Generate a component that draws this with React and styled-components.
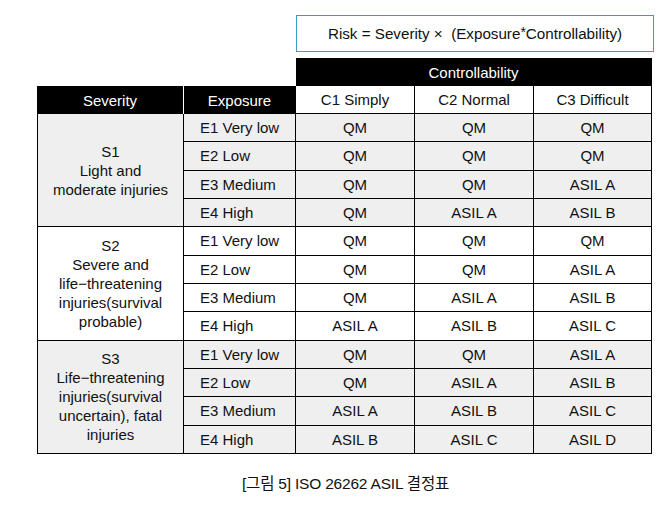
import React from "react"
import styled, { createGlobalStyle } from "styled-components"

const GlobalStyle = createGlobalStyle`
  body {
    margin: 0;
    background: #fff;
    font-family: "Liberation Sans", "Noto Sans CJK KR", sans-serif;
    color: #111;
  }
`

const groups = [
  {
    label: ["S1", "Light and", "moderate injuries"],
    shaded: true,
    rows: [
      ["E1 Very low", "QM", "QM", "QM"],
      ["E2 Low", "QM", "QM", "QM"],
      ["E3 Medium", "QM", "QM", "ASIL A"],
      ["E4 High", "QM", "ASIL A", "ASIL B"],
    ],
  },
  {
    label: ["S2", "Severe and", "life\u2212threatening", "injuries(survival", "probable)"],
    shaded: false,
    rows: [
      ["E1 Very low", "QM", "QM", "QM"],
      ["E2 Low", "QM", "QM", "ASIL A"],
      ["E3 Medium", "QM", "ASIL A", "ASIL B"],
      ["E4 High", "ASIL A", "ASIL B", "ASIL C"],
    ],
  },
  {
    label: ["S3", "Life\u2212threatening", "injuries(survival", "uncertain), fatal", "injuries"],
    shaded: true,
    rows: [
      ["E1 Very low", "QM", "QM", "ASIL A"],
      ["E2 Low", "QM", "ASIL A", "ASIL B"],
      ["E3 Medium", "ASIL A", "ASIL B", "ASIL C"],
      ["E4 High", "ASIL B", "ASIL C", "ASIL D"],
    ],
  },
]

function App() {
  return (
    <>
      <GlobalStyle />
      <Page>
        <Figure>
          <Formula>
            Risk = Severity&nbsp;×&nbsp;&nbsp;(Exposure<Star>*</Star>Controllability)
          </Formula>
          <Table>
            <colgroup>
              <col style={{ width: 147 }} />
              <col style={{ width: 112 }} />
              <col style={{ width: 119 }} />
              <col style={{ width: 119 }} />
              <col style={{ width: 118 }} />
            </colgroup>
            <thead>
              <HeadRow>
                <Blank />
                <Blank />
                <DarkCell colSpan={3}>Controllability</DarkCell>
              </HeadRow>
              <HeadRow>
                <DarkCell $first>Severity</DarkCell>
                <DarkCell>Exposure</DarkCell>
                <LightHead>C1 Simply</LightHead>
                <LightHead>C2 Normal</LightHead>
                <LightHead>C3 Difficult</LightHead>
              </HeadRow>
            </thead>
            <tbody>
              {groups.map((g) =>
                g.rows.map((r, i) => (
                  <BodyRow key={g.label[0] + i}>
                    {i === 0 && (
                      <SeverityCell rowSpan={4} $shaded={g.shaded}>
                        {g.label.map((line) => (
                          <div key={line}>{line}</div>
                        ))}
                      </SeverityCell>
                    )}
                    <ExposureCell $shaded={g.shaded}>{r[0]}</ExposureCell>
                    {r.slice(1).map((v, j) => (
                      <ValueCell key={j} $shaded={g.shaded}>
                        {v}
                      </ValueCell>
                    ))}
                  </BodyRow>
                ))
              )}
            </tbody>
          </Table>
          <Caption>[그림 5] ISO 26262 ASIL 결정표</Caption>
        </Figure>
      </Page>
    </>
  )
}

export default App

const Page = styled.div`
  width: 667px;
  height: 505px;
  padding: 15px 0 0 37px;
  box-sizing: border-box;
`

const Figure = styled.div`
  width: 617px;
  display: flex;
  flex-direction: column;
`

const Formula = styled.div`
  align-self: flex-end;
  width: 358px;
  height: 37px;
  box-sizing: border-box;
  border: 1px solid #3a9cc9;
  display: flex;
  align-items: center;
  justify-content: center;
  font-size: 15.2px;
`

const Star = styled.span`
  position: relative;
  top: -2px;
  font-size: 14px;
`

const Table = styled.table`
  margin-top: 6px;
  width: 615px;
  table-layout: fixed;
  border-collapse: separate;
  border-spacing: 0;
  font-size: 15px;
`

const HeadRow = styled.tr`
  height: 28px;
`

const BodyRow = styled.tr`
  height: 28.33px;
`

const Blank = styled.td`
  padding: 0;
`

const DarkCell = styled.th`
  background: #000;
  color: #fff;
  font-weight: normal;
  text-align: center;
  padding: 0;
  border-right: 1px solid ${(p) => (p.$first ? "#fff" : "#000")};
`

const LightHead = styled.th`
  font-weight: normal;
  text-align: center;
  padding: 0;
  border-right: 1px solid #000;
  border-bottom: 1px solid #000;
`

const SeverityCell = styled.td`
  background: ${(p) => (p.$shaded ? "#efefef" : "#fff")};
  text-align: center;
  line-height: 19px;
  padding: 0;
  border-left: 1px solid #000;
  border-right: 1px solid #000;
  border-bottom: 1px solid #000;
`

const ExposureCell = styled.td`
  background: ${(p) => (p.$shaded ? "#efefef" : "#fff")};
  padding: 0 0 0 16px;
  border-right: 1px solid #000;
  border-bottom: 1px solid #000;
`

const ValueCell = styled.td`
  background: ${(p) => (p.$shaded ? "#efefef" : "#fff")};
  text-align: center;
  padding: 0;
  border-right: 1px solid #000;
  border-bottom: 1px solid #000;
`

const Caption = styled.div`
  align-self: center;
  margin-top: 17px;
  font-size: 15.5px;
  letter-spacing: -0.2px;
`
